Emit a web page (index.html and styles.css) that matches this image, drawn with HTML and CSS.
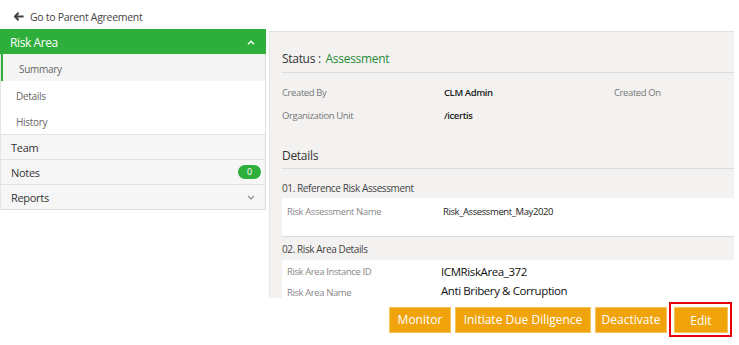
FILE: index.html
```html
<!DOCTYPE html>
<html lang="en">
<head>
  <meta charset="UTF-8">
  <meta name="viewport" content="width=device-width, initial-scale=1.0">
  <title>Risk Area - Summary</title>
  <link rel="stylesheet" href="styles.css">
</head>
<body>
  <div class="topbar">
    <a class="back-link" href="#">
      <svg class="back-icon" width="10" height="9" viewBox="0 0 10 9"><path d="M4.6 0.7 L1 4.5 L4.6 8.3 M1.2 4.5 H9.6" fill="none" stroke="#444" stroke-width="2"/></svg>
      Go to Parent Agreement
    </a>
  </div>

  <div class="layout">
    <div class="sidebar">
      <div class="nav-head">
        <span>Risk Area</span>
        <svg width="8" height="5" viewBox="0 0 8 5"><path d="M1 4.2 L4 1.2 L7 4.2" fill="none" stroke="#fff" stroke-width="1.4"/></svg>
      </div>
      <div class="nav-sub active">Summary</div>
      <div class="nav-sub">Details</div>
      <div class="nav-sub">History</div>
      <div class="nav-item">Team</div>
      <div class="nav-item">Notes <span class="badge">0</span></div>
      <div class="nav-item">Reports
        <svg width="8" height="5" viewBox="0 0 8 5"><path d="M1 1 L4 4 L7 1" fill="none" stroke="#888" stroke-width="1.1"/></svg>
      </div>
    </div>

    <div class="main">
      <div class="panel">
        <div class="status">Status : <span class="status-value">Assessment</span></div>

        <div class="meta">
          <div class="meta-label">Created By</div>
          <div class="meta-value">CLM Admin</div>
          <div class="meta-label">Created On</div>
          <div class="meta-label">Organization Unit</div>
          <div class="meta-value">/icertis</div>
        </div>

        <div class="section-title">Details</div>

        <div class="group-title first">01. Reference Risk Assessment</div>
        <div class="group-box tall">
          <div class="field">
            <div class="field-label">Risk Assessment Name</div>
            <div class="field-value">Risk_Assessment_May2020</div>
          </div>
        </div>

        <div class="group-title">02. Risk Area Details</div>
        <div class="group-box last">
          <div class="field">
            <div class="field-label">Risk Area Instance ID</div>
            <div class="field-value big">ICMRiskArea_372</div>
          </div>
          <div class="field">
            <div class="field-label">Risk Area Name</div>
            <div class="field-value big">Anti Bribery &amp; Corruption</div>
          </div>
        </div>
      </div>

      <div class="actions">
        <button class="btn btn-monitor">Monitor</button>
        <button class="btn btn-initiate">Initiate Due Diligence</button>
        <button class="btn btn-deactivate">Deactivate</button>
        <div class="highlight"><button class="btn btn-edit">Edit</button></div>
      </div>
    </div>
  </div>
</body>
</html>
```

FILE: styles.css
```css
body {
  margin: 0;
  font-family: "Open Sans", "Noto Sans", sans-serif;
  background: #fff;
  color: #333;
  width: 739px;
  height: 345px;
  overflow: hidden;
}
.topbar {
  height: 29px;
  display: flex;
  align-items: center;
  padding-left: 14px;
  padding-top: 4px;
  box-sizing: border-box;
}
.back-link {
  color: #444;
  text-decoration: none;
  font-size: 10.5px;
  letter-spacing: -0.3px;
  display: flex;
  align-items: center;
  gap: 6px;
}
.layout {
  display: flex;
  align-items: flex-start;
}
.sidebar {
  width: 266px;
  border-right: 1px solid #ddd;
  border-left: 1px solid #e4e4e4;
  border-bottom: 1px solid #ddd;
  box-sizing: border-box;
}
.nav-head {
  height: 25px;
  background: #2eae3b;
  color: #fff;
  font-size: 12px;
  letter-spacing: -0.4px;
  display: flex;
  align-items: center;
  justify-content: space-between;
  padding: 1px 11px 0 10px;
  box-sizing: border-box;
  margin-left: -1px;
  margin-right: -1px;
}
.nav-sub {
  height: 26.7px;
  display: flex;
  align-items: center;
  padding: 3px 0 0 15px;
  box-sizing: border-box;
  font-size: 10px;
  letter-spacing: -0.3px;
  color: #666;
}
.nav-sub.active {
  background: #f5f5f5;
  border-left: 2px solid #2eae3b;
  padding-left: 16px;
}
.nav-item {
  height: 24px;
  border-top: 1px solid #e2e2e2;
  background: #f6f6f6;
  display: flex;
  align-items: center;
  justify-content: space-between;
  padding: 0 10px 0 10px;
  font-size: 11px;
  letter-spacing: -0.3px;
  color: #333;
}
.badge {
  background: #2eae3b;
  color: #fff;
  font-size: 9px;
  letter-spacing: 0;
  border-radius: 7px;
  width: 23px;
  height: 14px;
  line-height: 14px;
  text-align: center;
  margin-right: -6px;
}
.main {
  margin-left: 3px;
  width: 465px;
}
.panel {
  background: #f3f2f1;
  border-top: 1px solid #e0e0e0;
  border-left: 1px solid #e6e6e6;
  margin-top: 2px;
  padding: 0 0 0 12px;
  height: 267px;
  box-sizing: border-box;
}
.status {
  font-size: 12px;
  letter-spacing: -0.3px;
  color: #333;
  padding: 18px 0 5px;
  border-bottom: 1px solid #ddd;
}
.status-value {
  color: #2a8a34;
  margin-left: 2px;
}
.meta {
  display: grid;
  grid-template-columns: 162px 170px 1fr;
  row-gap: 7px;
  padding-top: 13px;
  font-size: 9.5px;
  letter-spacing: -0.4px;
}
.meta-label {
  color: #777;
  height: 16px;
}
.meta-value {
  color: #222;
  font-weight: 600;
}
.section-title {
  font-size: 12px;
  letter-spacing: -0.3px;
  color: #333;
  padding: 22px 0 4px;
  border-bottom: 1px solid #ddd;
}
.group-title {
  font-size: 10px;
  letter-spacing: -0.4px;
  color: #444;
  line-height: 14px;
  padding: 5px 0 4px;
}
.group-title.first {
  padding: 12px 0 3px;
}
.group-box {
  background: #fff;
  border-bottom: 1px solid #ddd;
  padding: 4px 0 0 5px;
}
.group-box.tall {
  height: 39px;
  box-sizing: border-box;
}
.group-box.last {
  border-bottom: none;
  padding-top: 2px;
  height: 38px;
  box-sizing: border-box;
}
.field {
  display: flex;
  align-items: center;
  height: 19px;
}
.field + .field .field-label {
  padding-top: 3px;
}
.field-label {
  width: 156px;
  font-size: 9.5px;
  letter-spacing: -0.4px;
  color: #888;
}
.field-value {
  font-size: 9.5px;
  letter-spacing: -0.4px;
  color: #222;
}
.field-value.big {
  font-size: 11.5px;
  letter-spacing: -0.4px;
  color: #111;
  margin-left: -2px;
}
.actions {
  display: flex;
  justify-content: flex-end;
  align-items: center;
  gap: 4px;
  margin-top: 4px;
  margin-right: 2px;
}
.btn {
  background: #f0a30a;
  color: #fff;
  border: 1px solid #f6c65c;
  font-family: inherit;
  font-size: 12px;
  height: 26px;
  padding: 0;
  cursor: pointer;
}
.btn-monitor {
  width: 62px;
}
.btn-initiate {
  width: 136px;
}
.btn-deactivate {
  width: 72px;
}
.btn-edit {
  width: 54px;
}
.highlight {
  border: 2px solid #e8000b;
  padding: 3px 2px 2px 3px;
  margin-left: -2px;
}
```
